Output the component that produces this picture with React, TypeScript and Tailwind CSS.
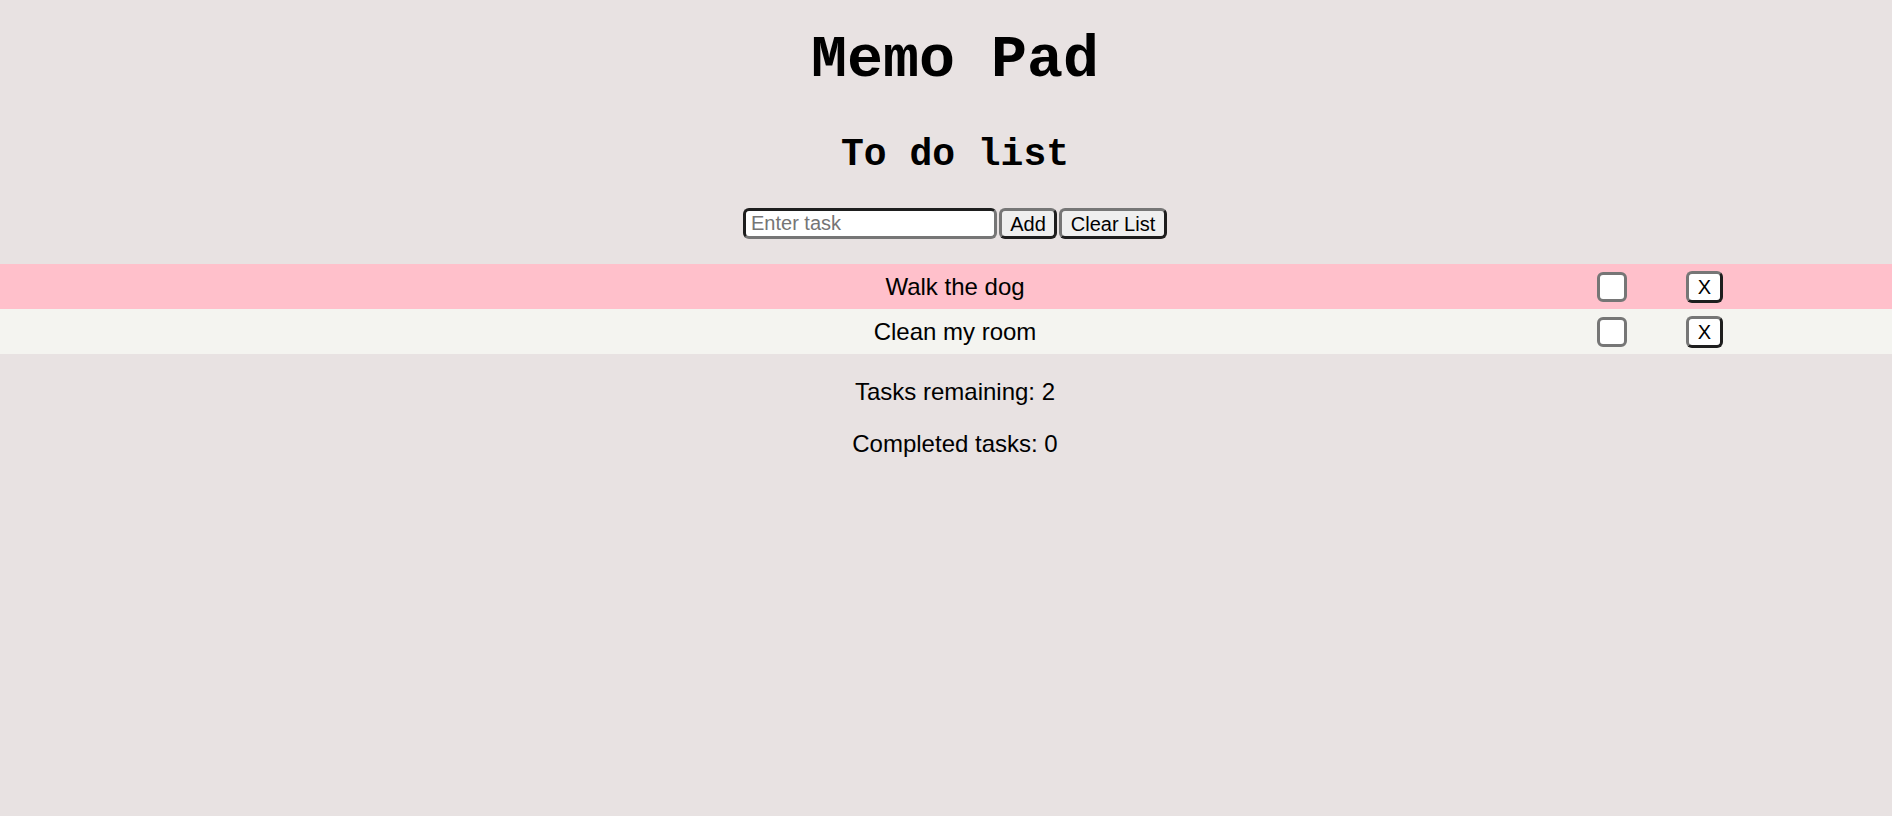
import { useState } from 'react';

interface Task {
  id: number;
  text: string;
  done: boolean;
}

export default function App() {
  const [tasks, setTasks] = useState<Task[]>([
    { id: 1, text: 'Walk the dog', done: false },
    { id: 2, text: 'Clean my room', done: false },
  ]);
  const [draft, setDraft] = useState('');

  const addTask = () => {
    if (!draft.trim()) return;
    setTasks([...tasks, { id: Date.now(), text: draft.trim(), done: false }]);
    setDraft('');
  };

  const toggle = (id: number) =>
    setTasks(tasks.map((t) => (t.id === id ? { ...t, done: !t.done } : t)));

  const remove = (id: number) => setTasks(tasks.filter((t) => t.id !== id));

  const remaining = tasks.filter((t) => !t.done).length;
  const completed = tasks.length - remaining;

  return (
    <div className="min-h-screen bg-[#e8e2e2] text-black font-['Liberation_Sans',Arial,sans-serif]">
      <div className="pl-[18px] pt-[30px] flex flex-col items-center">
        <h1 className="font-['Liberation_Mono','Courier_New',monospace] font-bold text-[60px] leading-[60px]">
          Memo Pad
        </h1>
        <h2 className="mt-[46px] font-['Liberation_Mono','Courier_New',monospace] font-bold text-[38px] leading-[38px]">
          To do list
        </h2>
        <div className="mt-[34px] flex items-center gap-[2px]">
          <input
            value={draft}
            onChange={(e) => setDraft(e.target.value)}
            placeholder="Enter task"
            className="w-[254px] h-[31px] px-[5px] bg-white text-[20px] rounded-[6px] border-[3px] border-t-[#1e1e1e] border-l-[#1e1e1e] border-b-[#767676] border-r-[#767676] outline-none placeholder:text-[#757575]"
          />
          <button
            onClick={addTask}
            className="w-[58px] h-[31px] bg-[#efefef] text-[20px] leading-none rounded-[6px] border-[3px] border-t-[#767676] border-l-[#767676] border-b-[#1e1e1e] border-r-[#1e1e1e]"
          >
            Add
          </button>
          <button
            onClick={() => setTasks([])}
            className="w-[108px] h-[31px] bg-[#efefef] text-[20px] leading-none rounded-[6px] border-[3px] border-t-[#767676] border-l-[#767676] border-b-[#1e1e1e] border-r-[#1e1e1e]"
          >
            Clear List
          </button>
        </div>
      </div>

      <ul className="mt-[25px]">
        {tasks.map((task, i) => (
          <li
            key={task.id}
            className={`flex items-center h-[45px] text-[24px] ${
              i % 2 === 0 ? 'bg-[#ffc0cb]' : 'bg-[#f4f4f0]'
            }`}
          >
            <span className="flex-1 pl-[313px] text-center">{task.text}</span>
            <div className="w-[295px] flex items-center">
              <button
                onClick={() => toggle(task.id)}
                className="w-[30px] h-[30px] bg-white rounded-[6px] border-[3px] border-[#767676] flex items-center justify-center"
              >
                {task.done && <span className="text-[18px] leading-none">✓</span>}
              </button>
              <button
                onClick={() => remove(task.id)}
                className="ml-[59px] w-[37px] h-[32px] bg-white text-[20px] leading-none rounded-[6px] border-[3px] border-t-[#767676] border-l-[#767676] border-b-[#1e1e1e] border-r-[#1e1e1e]"
              >
                X
              </button>
            </div>
          </li>
        ))}
      </ul>

      <div className="pl-[18px] mt-[24px] flex flex-col items-center text-[24px] leading-[28px] gap-[24px]">
        <p>Tasks remaining: {remaining}</p>
        <p>Completed tasks: {completed}</p>
      </div>
    </div>
  );
}
